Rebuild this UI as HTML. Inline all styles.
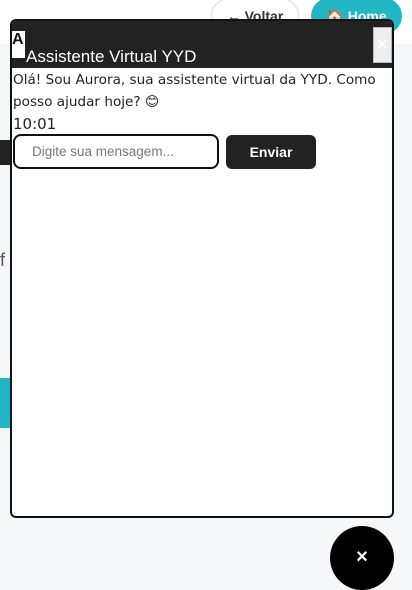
<!DOCTYPE html>
<html><head><style>
body{margin:0;width:412px;height:583px;position:relative;overflow:hidden;background:#f6f7f8;font-family:"Liberation Sans",sans-serif}
.top{position:absolute;left:0;top:0;width:412px;height:44px;background:#fff}
.btn1{position:absolute;left:211px;top:-2px;width:86px;height:34px;border:1px solid #ddd;border-radius:18px;background:#fff;font-weight:bold;color:#333;font-size:14px;line-height:34px;text-align:center}
.btn2{position:absolute;left:311px;top:-2px;width:91px;height:36px;border-radius:18px;background:#22b5c4;color:#fff;font-weight:bold;font-size:14px;line-height:36px;text-align:center}
.chat{position:absolute;left:10px;top:19px;width:380px;height:495px;border:2px solid #111;border-radius:6px;background:#fff;overflow:hidden}
.hd{height:47px;background:#222;position:relative}
.av{position:absolute;left:0;top:10px;width:13px;height:27px;background:#fff;color:#111;font-weight:bold;font-size:16px;line-height:18px}
.tt{position:absolute;left:14px;top:26px;color:#fff;font-size:17px}
.x{position:absolute;right:0;top:6px;width:17px;height:34px;background:#eee;border:1px solid #bbb;color:#fff;font-size:20px;line-height:34px;text-align:center}
.msg{font-family:"DejaVu Sans",sans-serif;font-size:13.6px;line-height:22px;color:#222;padding:1px 0 0 1px}
.row{position:absolute;left:1px;top:113px}
.inp{position:absolute;left:0;top:0;height:31px;border:2px solid #111;border-radius:8px;color:#777;font-size:13.5px;line-height:31px;padding-left:17px;width:185px}
.env{position:absolute;left:213px;top:1px;width:90px;height:34px;background:#222;border-radius:6px;color:#fff;font-weight:bold;font-size:14px;line-height:34px;text-align:center}
.fab{position:absolute;left:330px;top:526px;width:64px;height:64px;border-radius:50%;background:#000;color:#fff;font-size:20px;font-weight:bold;text-align:center;line-height:62px}
.teal{position:absolute;left:0;top:378px;width:12px;height:50px;background:#22b5c4}
</style></head><body>
<div class="top"></div>
<div class="btn1">← Voltar</div>
<div class="btn2">🏠 Home</div>
<div style="position:absolute;left:0;top:140px;width:10px;height:25px;background:#222"></div>
<div style="position:absolute;left:0;top:250px;font-size:18px;color:#556">f</div>
<div class="teal"></div>
<div class="chat">
<div class="hd"><div class="av">A</div><div class="tt">Assistente Virtual YYD</div><div class="x">×</div></div>
<div class="msg">Olá! Sou Aurora, sua assistente virtual da YYD. Como posso ajudar hoje? 😊<br><span style="font-size:15px">10:01</span></div>
<div class="row"><div class="inp">Digite sua mensagem...</div><div class="env">Enviar</div></div>
</div>
<div class="fab">×</div>
</body></html>
